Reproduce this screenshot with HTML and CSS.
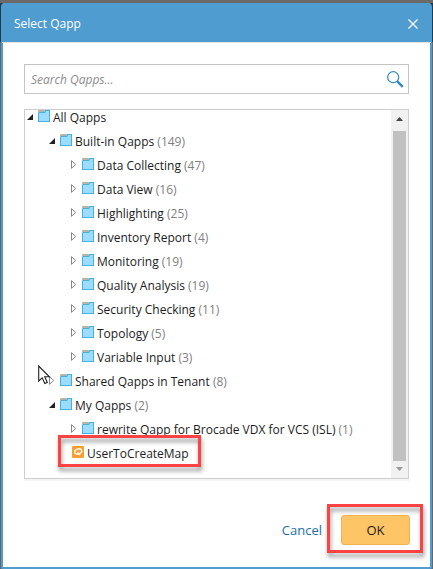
FILE: index.html
```html
<!DOCTYPE html>
<html lang="en">
<head>
<meta charset="utf-8">
<title>Select Qapp</title>
<link rel="stylesheet" href="styles.css">
</head>
<body>
<svg class="defs" width="0" height="0">
  <symbol id="folder" viewBox="0 0 12 12"><path d="M0 2h6l1-2h5v12H0z" fill="#45b0e6"/><path d="M1 3h6l1-2h3v10H1z" fill="#9bdcff"/><path d="M0 3V1l1-1h6L6 2H1v1z" fill="#b9b2a8"/></symbol>
  <symbol id="open" viewBox="0 0 6 6"><path d="M6 0v6H0z" fill="#222"/></symbol>
  <symbol id="closed" viewBox="0 0 6 9"><path d="M.5.7v7.6L4.7 4.5z" fill="#fff" stroke="#777" stroke-width=".9"/></symbol>
</svg>
<div class="dialog">
  <header class="header">
    <span class="title">Select Qapp</span>
    <svg class="close" width="10" height="10" viewBox="0 0 10 10"><path d="M.5.5l9 9M9.5.5l-9 9" stroke="#fff" stroke-width="1.3"/></svg>
  </header>
  <div class="search">
    <span>Search Qapps...</span>
    <svg width="17" height="17" viewBox="0 0 17 17" fill="none" stroke="#3289c2"><circle cx="6.2" cy="6.2" r="5.5" stroke-width="1.2"/><path d="M10.3 10.3l5.5 5.5" stroke-width="2.4"/></svg>
  </div>
  <div class="list">
    <div class="tree">
      <div class="row l0"><svg class="open"><use href="#open"/></svg><svg class="folder"><use href="#folder"/></svg><span>All Qapps</span></div>
      <div class="row l1"><svg class="open"><use href="#open"/></svg><svg class="folder"><use href="#folder"/></svg><span>Built-in Qapps <i>(149)</i></span></div>
      <div class="row l2"><svg class="closed"><use href="#closed"/></svg><svg class="folder"><use href="#folder"/></svg><span>Data Collecting <i>(47)</i></span></div>
      <div class="row l2"><svg class="closed"><use href="#closed"/></svg><svg class="folder"><use href="#folder"/></svg><span>Data View <i>(16)</i></span></div>
      <div class="row l2"><svg class="closed"><use href="#closed"/></svg><svg class="folder"><use href="#folder"/></svg><span>Highlighting <i>(25)</i></span></div>
      <div class="row l2"><svg class="closed"><use href="#closed"/></svg><svg class="folder"><use href="#folder"/></svg><span>Inventory Report <i>(4)</i></span></div>
      <div class="row l2"><svg class="closed"><use href="#closed"/></svg><svg class="folder"><use href="#folder"/></svg><span>Monitoring <i>(19)</i></span></div>
      <div class="row l2"><svg class="closed"><use href="#closed"/></svg><svg class="folder"><use href="#folder"/></svg><span>Quality Analysis <i>(19)</i></span></div>
      <div class="row l2"><svg class="closed"><use href="#closed"/></svg><svg class="folder"><use href="#folder"/></svg><span>Security Checking <i>(11)</i></span></div>
      <div class="row l2"><svg class="closed"><use href="#closed"/></svg><svg class="folder"><use href="#folder"/></svg><span>Topology <i>(5)</i></span></div>
      <div class="row l2"><svg class="closed"><use href="#closed"/></svg><svg class="folder"><use href="#folder"/></svg><span>Variable Input <i>(3)</i></span></div>
      <div class="row l1"><svg class="closed"><use href="#closed"/></svg><svg class="folder"><use href="#folder"/></svg><span>Shared Qapps in Tenant <i>(8)</i></span></div>
      <div class="row l1"><svg class="open"><use href="#open"/></svg><svg class="folder"><use href="#folder"/></svg><span>My Qapps <i>(2)</i></span></div>
      <div class="row l2"><svg class="closed"><use href="#closed"/></svg><svg class="folder"><use href="#folder"/></svg><span>rewrite Qapp for Brocade VDX for VCS (ISL) <i>(1)</i></span></div>
      <div class="row leaf"><svg class="qapp" viewBox="0 0 12 12"><rect width="12" height="12" rx="1" fill="#f7a030"/><ellipse cx="6.2" cy="5.500" rx="3.600" ry="2.500" transform="rotate(-20 6.200 5.500)" fill="none" stroke="#fff" stroke-width="1.300"/><path d="M5.500 6.200L8 9.200" stroke="#fff" stroke-width="1.300"/></svg><span>UserToCreateMap</span></div>
    </div>
    <div class="scrollbar">
      <svg width="7" height="4" viewBox="0 0 7 4"><path d="M0 4L3.500 0 7 4z" fill="#444"/></svg>
      <div class="thumb"></div>
      <svg width="7" height="4" viewBox="0 0 7 4"><path d="M0 0h7L3.500 4z" fill="#999"/></svg>
    </div>
  </div>
  <footer class="footer">
    <span class="cancel">Cancel</span>
    <span class="ok">OK</span>
  </footer>
</div>
<div class="mark mark-item"></div>
<div class="mark mark-ok"></div>
<svg class="cursor" width="13" height="20" viewBox="0 0 13 20"><path d="M.7 1v15l3.500-3.200 2.600 5.700 2.500-1.100-2.600-5.600h4.700z" fill="#fff" stroke="#222" stroke-width="1.100"/></svg>
</body>
</html>
```
FILE: styles.css
```css
* { box-sizing: border-box; }
body {
  margin: 0;
  width: 433px;
  height: 569px;
  padding: 3px 1px 0;
  overflow: hidden;
  position: relative;
  background: linear-gradient(#6b6a69 3px, #1f3b4a 3px, #1f3b4a 42px, #666 42px);
  font: 12.5px/24px "Open Sans", sans-serif;
  color: #1c1c1c;
}
.defs { position: absolute; }
.dialog {
  width: 431px;
  height: 566px;
  background: #fff;
  border: 2px solid #4f9cd1;
  border-top: 0;
  border-radius: 4px 4px 2px 2px;
}
.header {
  height: 40px;
  margin: 0 -1px;
  padding: 2px 13px 0 12px;
  display: flex;
  justify-content: space-between;
  align-items: center;
  background: #4f9cd1;
  border-bottom: 1px solid #e2e2e2;
  border-radius: 3px 3px 0 0;
  color: #fff;
}
.title { font-size: 12px; }
.close { margin-top: 1px; }
.search {
  width: 385px;
  height: 30px;
  margin: 21px 0 15px 21px;
  padding: 0 4px 0 6px;
  display: flex;
  align-items: center;
  justify-content: space-between;
  border: 1px solid #c4c4c4;
  color: #8c8c8c;
  font-size: 12px;
  font-style: italic;
}
.search span { margin-top: 2px; }
.list {
  width: 385px;
  height: 370px;
  margin-left: 21px;
  display: flex;
  border: 1px solid #cdcdcd;
  box-shadow: 0 2px 0 #f5f5f5;
  overflow: hidden;
}
.tree { flex: 1; margin-top: -4px; }
.row { height: 24px; display: flex; align-items: center; white-space: nowrap; font-size: 12px; }
.row i { font-style: normal; color: #808080; }
.l0 { padding-left: 2px; }
.l1 { padding-left: 24px; }
.l2 { padding-left: 46px; }
.leaf { padding-left: 47px; }
.open { width: 6px; height: 6px; margin: -2px 5px 0 0; }
.closed { width: 6px; height: 9px; margin: -3px 5px 0 0; }
.folder { width: 12px; height: 12px; margin: -4px 3px 0 0; }
.qapp { width: 12px; height: 12px; margin: -4px 3px 0 0; }
.scrollbar {
  width: 17px;
  padding: 7px 0;
  display: flex;
  flex-direction: column;
  align-items: center;
  justify-content: space-between;
  background: #f1f1f1;
}
.thumb { width: 13px; height: 330px; margin-top: 4px; background: #c1c1c1; }
.footer {
  margin: 36px 20px 0 0;
  display: flex;
  align-items: center;
  justify-content: flex-end;
  gap: 19px;
  font-size: 13px;
}
.cancel { color: #1871a5; }
.ok {
  width: 69px;
  height: 30px;
  line-height: 29px;
  text-align: center;
  background: #fdc566;
  border: 1px solid #f1b150;
  border-radius: 3px;
}
.mark {
  position: absolute;
  border: 3px solid #fb4343;
  filter: drop-shadow(1px 4px 2px rgba(0, 0, 0, .4));
}
.mark-item { left: 58px; top: 435px; width: 143px; height: 32px; }
.mark-ok { left: 327px; top: 504px; width: 96px; height: 49px; }
.cursor { position: absolute; left: 38px; top: 365px; }
```
